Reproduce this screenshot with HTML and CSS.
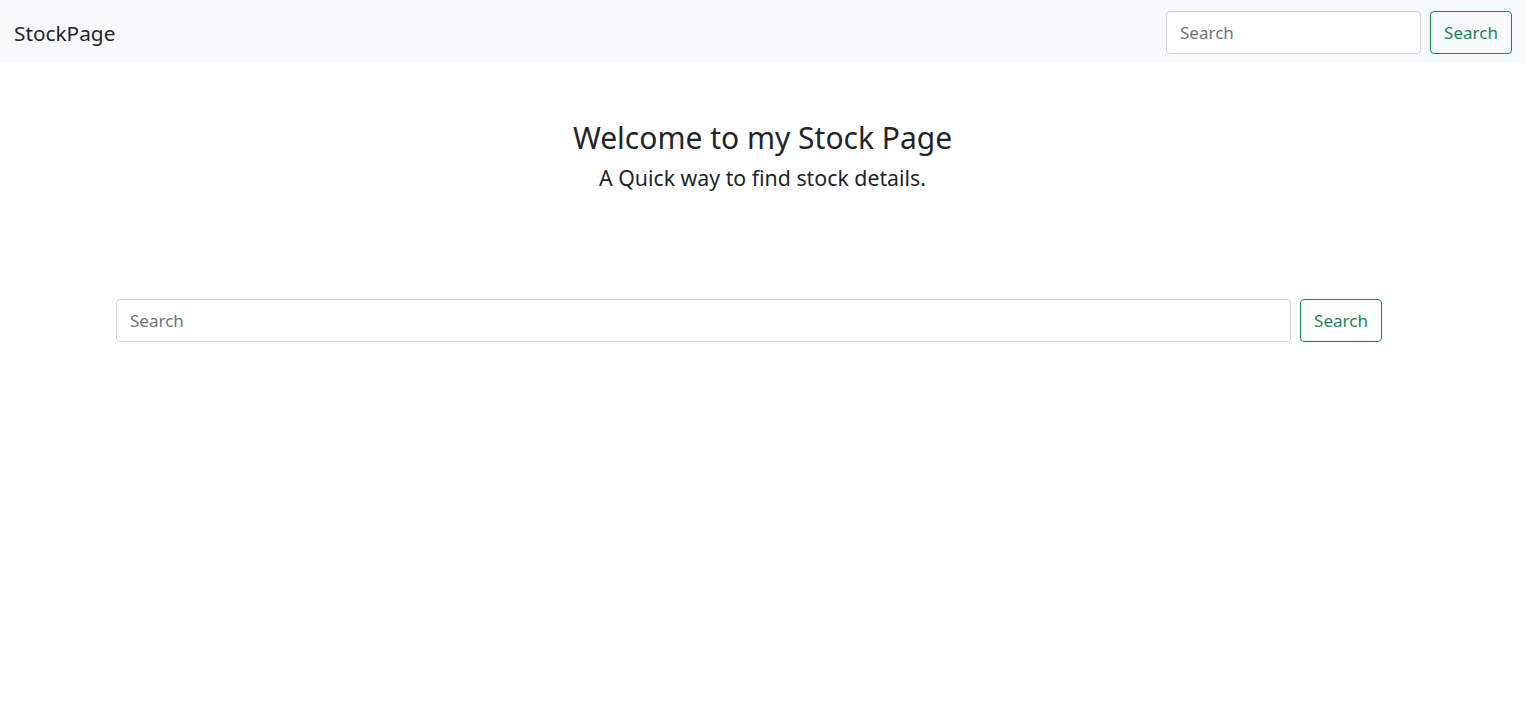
FILE: index.html
```html
<!DOCTYPE html>
<html lang="en">
<head>
<meta charset="utf-8">
<title>StockPage</title>
<link rel="stylesheet" href="styles.css">
</head>
<body>
<nav class="navbar">
  <a class="brand" href="#">StockPage</a>
  <form class="nav-form">
    <input class="field nav-field" type="search" placeholder="Search">
    <button class="btn" type="button">Search</button>
  </form>
</nav>
<main class="main">
  <header class="hero">
    <h1 class="title">Welcome to my Stock Page</h1>
    <p class="lead">A Quick way to find stock details.</p>
  </header>
  <form class="main-form">
    <input class="field main-field" type="search" placeholder="Search">
    <button class="btn" type="button">Search</button>
  </form>
</main>
</body>
</html>
```
FILE: styles.css
```css
* { box-sizing: border-box; }
html, body { margin: 0; padding: 0; }
body {
  font-family: "Noto Sans", "Open Sans", sans-serif;
  color: #212529;
  background: #fff;
  font-size: 17px;
}
.navbar {
  height: 63px;
  background: #f8f9fa;
  display: flex;
  align-items: center;
  justify-content: space-between;
  padding: 0 13px 0 14px;
}
.brand {
  font-size: 20.8px;
  color: #212529;
  text-decoration: none;
  line-height: 30px;
  margin-top: 2px;
}
.nav-form {
  display: flex;
  gap: 9px;
  align-items: center;
  padding-top: 1px;
}
.field {
  height: 43px;
  border: 1px solid #ced4da;
  border-radius: 4px;
  padding: 0 13px;
  font: inherit;
  font-size: 17px;
  color: #212529;
  background: #fff;
  outline: none;
}
.field::placeholder { color: #6c757d; }
.nav-field { width: 255px; }
.btn {
  height: 43px;
  width: 82px;
  border: 1px solid #198754;
  border-radius: 4px;
  background: transparent;
  color: #198754;
  font: inherit;
  font-size: 17px;
  padding: 0;
}
.main {
  padding-top: 56px;
}
.hero { text-align: center; }
.title {
  margin: 0;
  font-size: 30px;
  font-weight: 400;
  line-height: 37px;
}
.lead {
  margin: 5px 0 0;
  font-size: 21.3px;
  line-height: 33px;
}
.main-form {
  margin: 105px 143px 0 116px;
  display: flex;
  gap: 9px;
}
.main-field { flex: 1; }
```
